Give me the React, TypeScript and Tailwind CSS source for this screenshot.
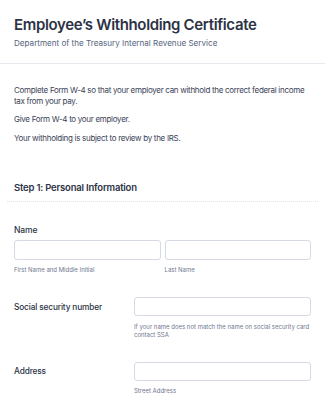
import React from "react";

export default function App() {
  return (
    <div className="w-[325px] h-[400px] overflow-hidden bg-white text-[#2c3345]" style={{ fontFamily: "Inter, 'Noto Sans', sans-serif" }}>
      <div className="px-[14px] pt-[16px] pb-[15px] border-b border-[#e8eaf0]">
        <div className="text-[15px] leading-[18px] font-semibold tracking-[-0.35px] whitespace-nowrap">Employee’s Withholding Certificate</div>
        <div className="mt-[4px] text-[8.1px] leading-[10px] text-[#57647e] whitespace-nowrap">Department of the Treasury Internal Revenue Service</div>
      </div>
      <div className="px-[14px] pt-[20.5px] text-[8px] leading-[11px] tracking-[-0.3px] text-[#3a4256]">
        <p>Complete Form W-4 so that your employer can withhold the correct federal income tax from your pay.</p>
        <p className="mt-[7.3px]">Give Form W-4 to your employer.</p>
        <p className="mt-[8.5px]">Your withholding is subject to review by the IRS.</p>
      </div>
      <div className="mx-[7px] mt-[38px] px-[7px] pb-[7px] border-b border-dotted border-[#e3e5ee]">
        <div className="text-[9.5px] leading-[12px] font-semibold tracking-[-0.2px]">Step 1: Personal Information</div>
      </div>
      <div className="px-[14px] pt-[23px]">
        <div className="text-[8.5px] leading-[10px] font-medium tracking-[-0.1px]">Name</div>
        <div className="mt-[5px] flex gap-[4px] w-[297px]">
          <div className="flex-1">
            <div className="h-[20px] rounded-[3px] border border-[#d6d9e6]" />
            <div className="mt-[5.5px] text-[6px] leading-[7px] text-[#6f7790] whitespace-nowrap">First Name and Middle Initial</div>
          </div>
          <div className="flex-1">
            <div className="h-[20px] rounded-[3px] border border-[#d6d9e6]" />
            <div className="mt-[5.5px] text-[6px] leading-[7px] text-[#6f7790] whitespace-nowrap">Last Name</div>
          </div>
        </div>
        <div className="mt-[24.5px] flex w-[297px]">
          <div className="w-[120px] pt-[5px] text-[8.3px] leading-[10px] font-medium tracking-[-0.15px] whitespace-nowrap">Social security number</div>
          <div className="flex-1">
            <div className="h-[19px] rounded-[3px] border border-[#d6d9e6]" />
            <div className="mt-[7px] text-[6px] leading-[8px] text-[#6f7790]">If your name does not match the name on social security card contact SSA</div>
          </div>
        </div>
        <div className="mt-[23px] flex w-[297px]">
          <div className="w-[120px] pt-[4px] text-[8.3px] leading-[10px] font-medium tracking-[-0.15px]">Address</div>
          <div className="flex-1">
            <div className="h-[19px] rounded-[3px] border border-[#d6d9e6]" />
            <div className="mt-[6px] text-[6px] leading-[8px] text-[#6f7790] whitespace-nowrap">Street Address</div>
          </div>
        </div>
      </div>
    </div>
  );
}
